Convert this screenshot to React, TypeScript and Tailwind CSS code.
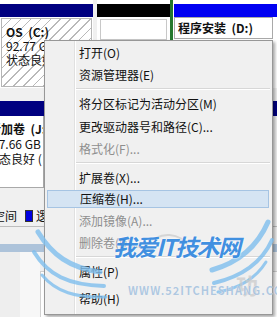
import React from "react";

const font = { fontFamily: '"Noto Sans CJK SC", "Noto Sans", sans-serif' };

type Item = { label: string; h: number; disabled?: boolean; hl?: boolean } | { sep: true };

const items: Item[] = [
  { label: "打开(O)", h: 23 },
  { label: "资源管理器(E)", h: 22 },
  { sep: true },
  { label: "将分区标记为活动分区(M)", h: 23 },
  { label: "更改驱动器号和路径(C)...", h: 23 },
  { label: "格式化(F)...", h: 22, disabled: true },
  { sep: true },
  { label: "扩展卷(X)...", h: 23 },
  { label: "压缩卷(H)...", h: 20, hl: true },
  { label: "添加镜像(A)...", h: 23, disabled: true },
  { label: "删除卷(D)...", h: 22, disabled: true },
  { sep: true },
  { label: "属性(P)", h: 24 },
  { label: "帮助(H)", h: 30 },
];

export default function App() {
  return (
    <div className="relative w-[277px] h-[317px] overflow-hidden bg-[#f0f0f0] text-[12px] text-[#111]" style={font}>
      {/* Disk 0 row */}
      <div className="flex h-[88px] bg-white">
        <div className="w-[93px] flex flex-col pt-[4px]">
          <div className="h-[13px] bg-[#000080]" />
          <div className="flex-1 border border-[#b5b5b5] m-[1px] bg-[repeating-linear-gradient(135deg,#ffffff_0px,#ffffff_6px,#b9b9b9_6px,#b9b9b9_7px)] px-[4px] pt-[6px] leading-[14px]">
            <div className="font-bold">OS&nbsp;&nbsp;(C:)</div>
            <div>92.77 GB NTFS</div>
            <div>状态良好 (启动</div>
          </div>
        </div>
        <div className="w-[4px] bg-[#f0f0f0]" />
        <div className="w-[73px] flex flex-col pt-[4px]">
          <div className="h-[13px] bg-black" />
          <div className="h-[21px] mx-[3px] mt-[2px] border border-[#c8c8c8] bg-white" />
        </div>
        <div className="flex-1 border-l-[3px] border-[#24782d] flex flex-col pt-[4px] pl-[1px]">
          <div className="h-[13px] bg-[#0000f2]" />
          <div className="h-[22px] border border-[#a9a9a9] mr-[4px] bg-white px-[3px] font-bold leading-[20px]">
            程序安装&nbsp;&nbsp;(D:)
          </div>
        </div>
      </div>
      <div className="h-[12px] bg-[#f0f0f0]" />
      {/* Disk 1 row */}
      <div className="flex flex-col h-[88px]">
        <div className="h-[15px] bg-[#000080] mt-[1px]" />
        <div className="flex-1 w-[44px] bg-white border-r border-b border-[#a9a9a9] overflow-hidden leading-[15px] pt-[5px]">
          <div className="ml-[-11px] whitespace-nowrap font-bold">新加卷&nbsp;&nbsp;(J:)</div>
          <div className="ml-[-8px] whitespace-nowrap">97.66 GB</div>
          <div className="ml-[-13px] whitespace-nowrap">状态良好 (</div>
        </div>
      </div>
      <div className="h-[17px] bg-[#f0f0f0]" />
      {/* legend */}
      <div className="h-[22px] flex items-center border-b border-[#bdbdbd] bg-[#f0f0f0] whitespace-nowrap">
        <span className="ml-[-7px]">空间</span>
        <span className="ml-[8px] w-[8px] h-[12px] bg-[#0000e0] border border-[#333]" />
        <span className="ml-[3px]">逻辑</span>
      </div>
      <div className="h-[17px] bg-[#f0f0f0]" />
      <div className="h-[8px] bg-[#adc3da]" />
      <div className="flex h-[70px]">
        <div className="w-[20px] bg-[#eeeeee]" />
        <div className="w-[20px] bg-[#f7f7f7]" />
        <div className="flex-1 mt-[19px] bg-white border-l border-t border-[#d0d0d0]" />
      </div>

      {/* Context menu */}
      <div className="absolute left-[44px] top-[40px] w-[229px] h-[275px] bg-[#f0f0f0] border border-[#979797] shadow-[2px_2px_3px_rgba(0,0,0,0.35)]">
        <div className="absolute left-[29px] top-0 bottom-0 w-[1px] bg-[#e0e0e0]" />
        <div className="absolute left-[30px] top-0 bottom-0 w-[1px] bg-white" />
        <div className="relative flex flex-col">
          {items.map((it, i) =>
            "sep" in it ? (
              <div key={i} className="h-[6px] flex flex-col pl-[31px] pr-[2px] pt-[2px]">
                <div className="h-[1px] bg-[#d7d7d7]" />
                <div className="h-[1px] bg-white" />
              </div>
            ) : it.hl ? (
              <div key={i} className="flex flex-col px-[2px] py-[1px]" style={{ height: it.h }}>
                <div className="flex-1 flex items-center pl-[32px] bg-[#d5e4f3] border border-[#a6c4e3] leading-[16px] mr-[1px]">
                  {it.label}
                </div>
              </div>
            ) : (
              <div
                key={i}
                className={`flex items-center pl-[34px] leading-[16px] ${it.disabled ? "text-[#8e8e8e]" : "text-[#111]"}`}
                style={{ height: it.h }}
              >
                {it.label}
              </div>
            )
          )}
        </div>
      </div>

      {/* Watermark */}
      <svg className="absolute left-0 top-0 pointer-events-none" width="277" height="317" viewBox="0 0 277 317">
        <g fill="none" stroke="#7fbfee" strokeLinecap="round" opacity="0.8">
          <path d="M38 232 C 52 255, 70 268, 100 272" strokeWidth="5" />
          <path d="M34 252 C 48 275, 68 285, 104 286" strokeWidth="4" />
          <path d="M42 275 C 56 292, 76 298, 106 297" strokeWidth="3" />
          <path d="M268 222 C 258 245, 240 262, 212 270" strokeWidth="5" />
          <path d="M272 240 C 262 262, 244 276, 214 283" strokeWidth="4" />
          <path d="M266 262 C 256 278, 240 288, 218 292" strokeWidth="3" />
          <path d="M146 246 C 160 230, 180 232, 190 248" stroke="#cfcfcf" strokeWidth="2" />
        </g>
      </svg>
      <div className="absolute left-[113px] top-[229px] pointer-events-none text-[23px] font-bold italic text-[#2f86df] opacity-90 tracking-[-1.5px] [text-shadow:0_0_2px_#ffffff,0_0_2px_#ffffff]">
        我爱IT技术网
      </div>
      <div className="absolute left-[236px] top-[268px] pointer-events-none text-[22px] font-bold text-[#c9c9c9] opacity-70">
        功
      </div>
      <div className="absolute left-[128px] top-[282px] pointer-events-none text-[11px] font-bold tracking-[1px] text-[#a9c4df] opacity-90 [text-shadow:0_0_1px_#ffffff]">
        WWW.52ITCHESHANG.CC
      </div>
    </div>
  );
}
